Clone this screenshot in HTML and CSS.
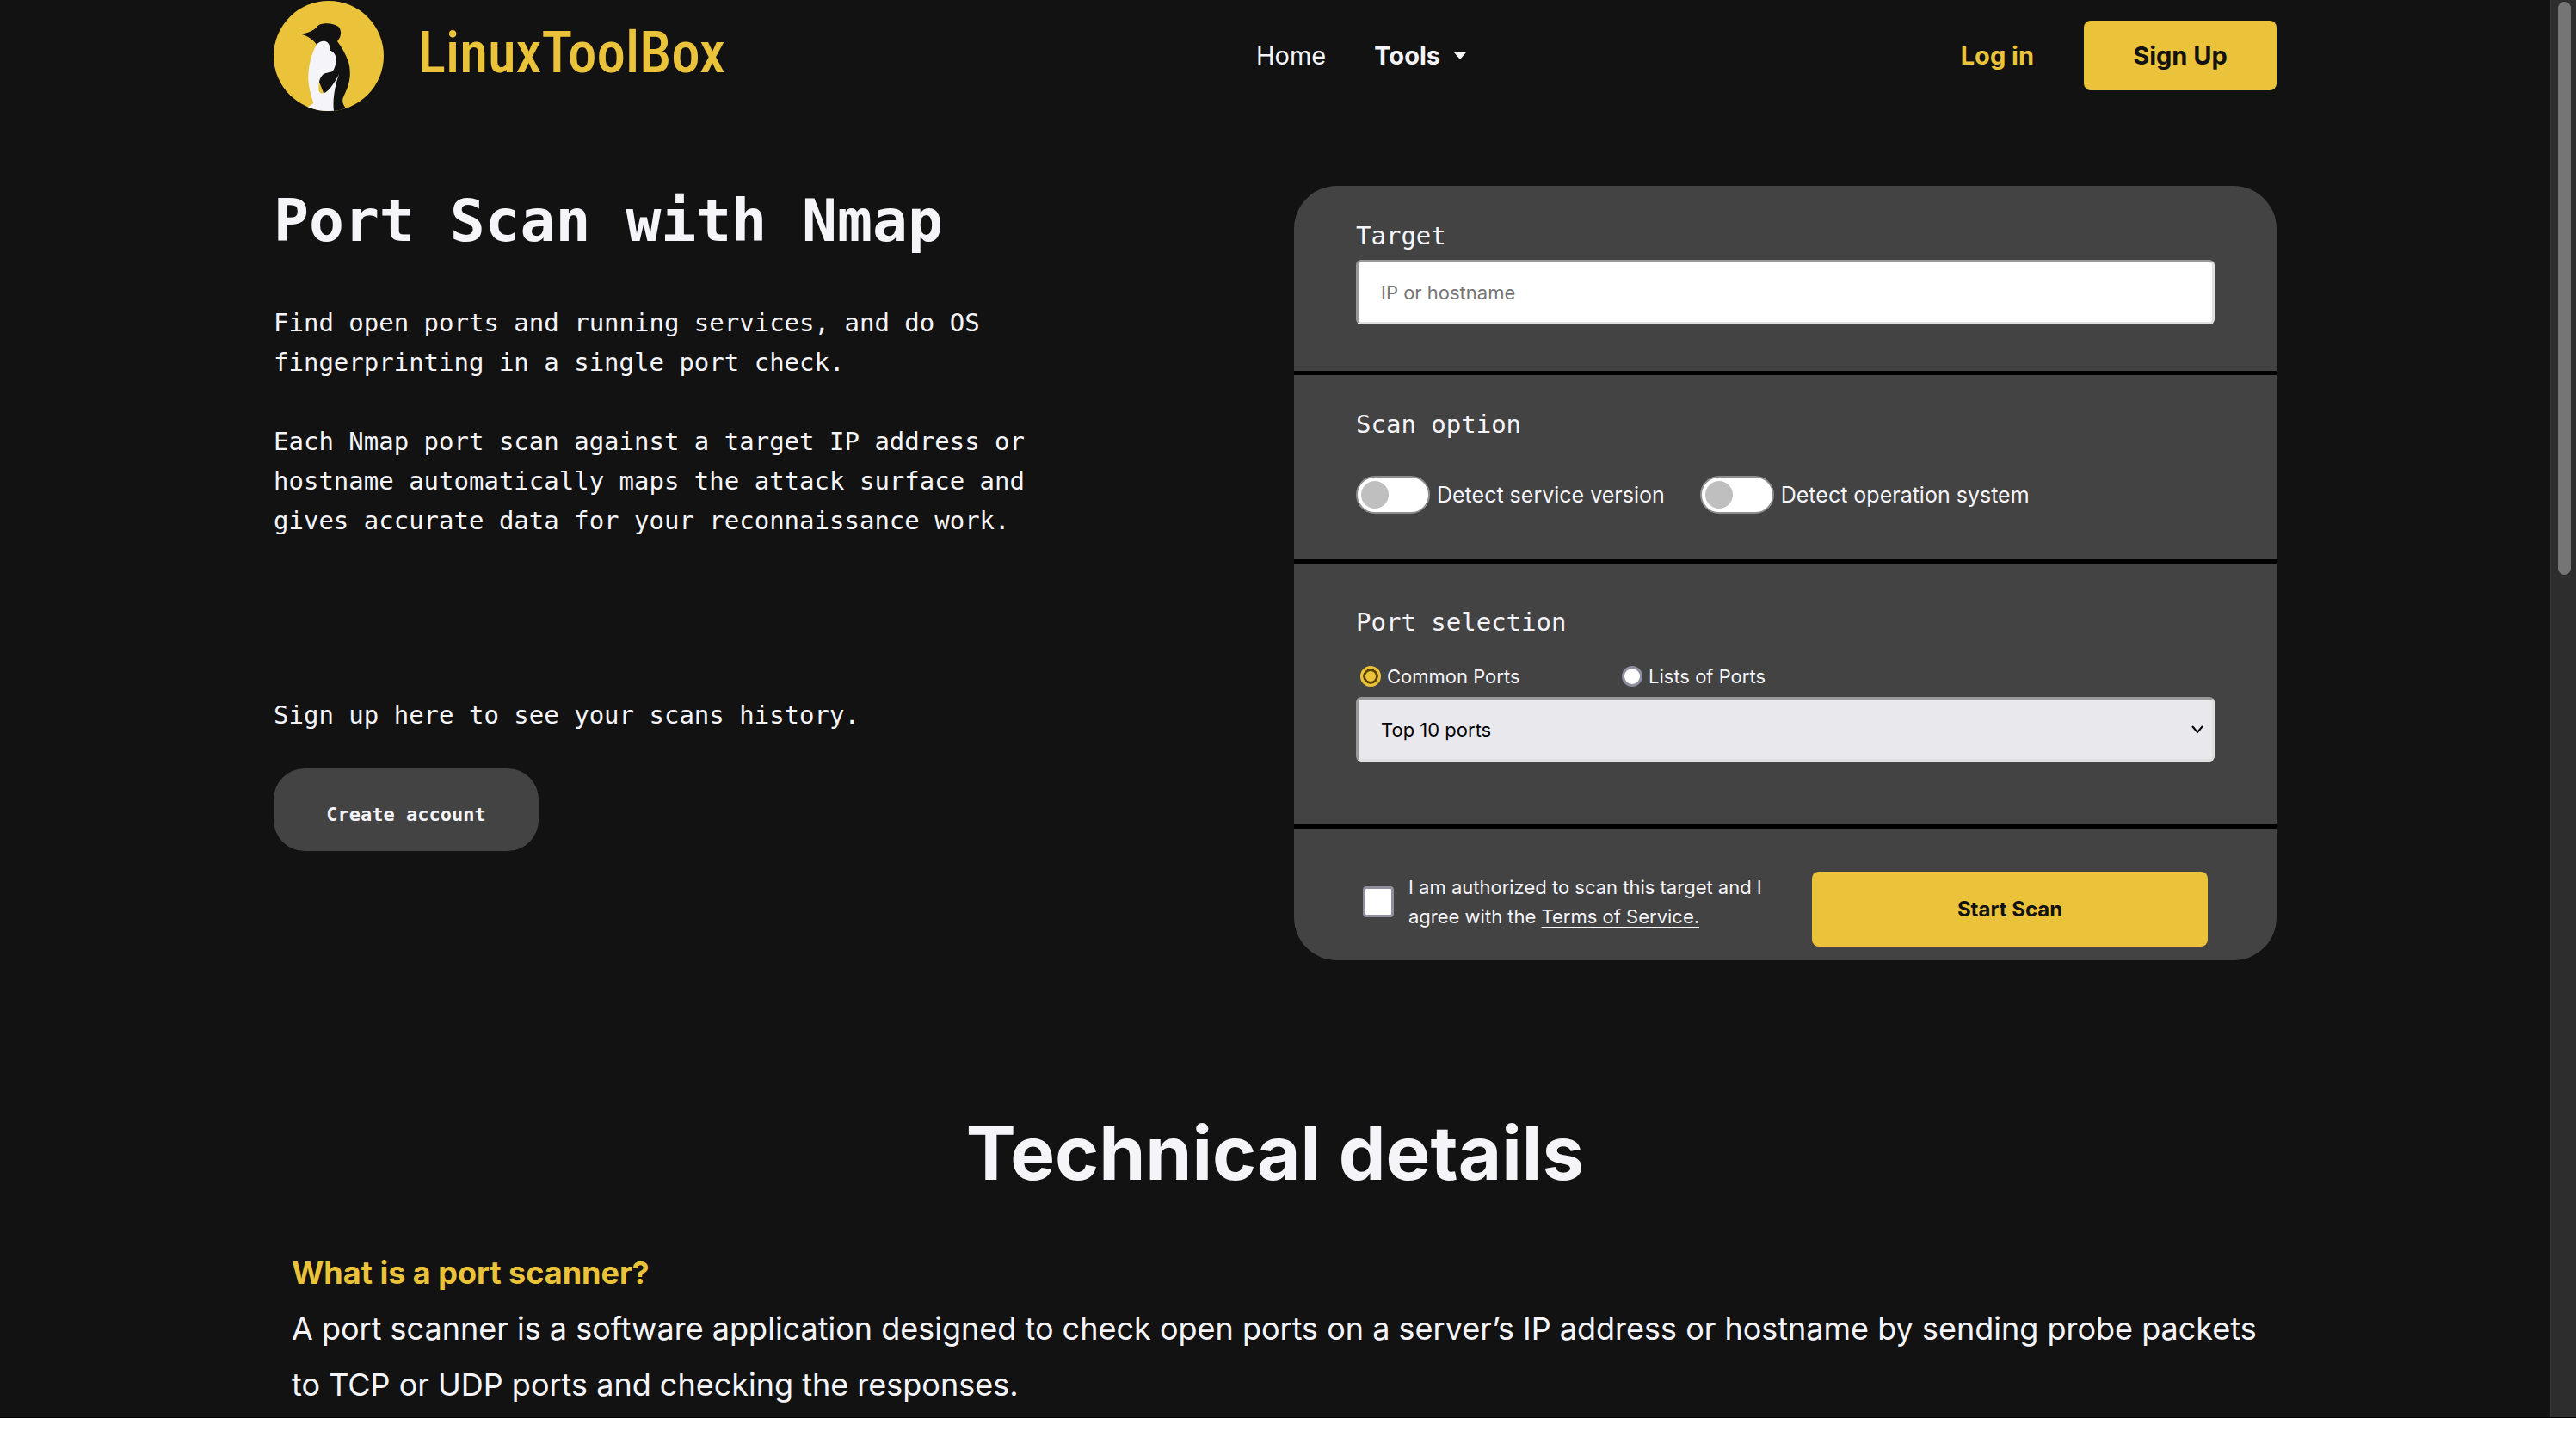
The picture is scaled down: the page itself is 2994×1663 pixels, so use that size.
FILE: index.html
```html
<!DOCTYPE html>
<html lang="en">
<head>
<meta charset="utf-8">
<meta name="viewport" content="width=device-width, initial-scale=1">
<title>Port Scan with Nmap - LinuxToolBox</title>
<link rel="stylesheet" href="styles.css">
</head>
<body>
<div class="viewport">
  <div class="page">
    <header class="header container">
      <a class="brand" href="#">
        <svg class="brand-mark" viewBox="24 5 384 384" aria-hidden="true">
          <defs><clipPath id="disc"><circle cx="216" cy="197" r="192"/></clipPath></defs>
          <circle cx="216" cy="197" r="192" fill="#ebc33a"/>
          <g clip-path="url(#disc)">
            <path fill="#121212" d="M119 121C150 116 163 107 174 97C183 86 195 84 209 84C225 84 238 88 249 94C257 101 259 111 258 122C256 134 250 140 246 146C262 168 275 190 283 213C290 233 291 250 290 270C288 295 278 318 268 339C261 353 265 366 275 378L280 395L226 395L160 230L174 157C160 138 143 127 119 121Z"/>
            <path fill="#f4f4f9" d="M172 160C181 148 190 145 201 145C214 147 222 158 221 178C233 182 242 193 242 209C241 227 237 242 230 250C218 256 202 254 193 265C182 278 181 296 181 314C183 325 189 328 197 327C208 324 215 316 223 307C235 292 244 276 252 261C245 280 240 300 236 324C233 345 231 366 234 390L140 390L146 373L163 362C155 336 147 310 145 280C144 235 154 195 172 160Z"/>
          </g>
        </svg>
        <span class="brand-name">LinuxToolBox</span>
      </a>
      <nav class="nav" aria-label="Main">
        <a href="#">Home</a>
        <button class="nav-menu" type="button">Tools
          <svg class="caret" viewBox="0 0 14 8" aria-hidden="true"><path d="M0 0H14L7 8Z" fill="currentColor"/></svg>
        </button>
      </nav>
      <div class="account">
        <a class="login" href="#">Log in</a>
        <a class="button signup" href="#">Sign Up</a>
      </div>
    </header>

    <main class="container">
      <section class="hero">
        <div class="intro">
          <h1>Port Scan with Nmap</h1>
          <p>Find open ports and running services, and do OS fingerprinting in a single port check.</p>
          <p>Each Nmap port scan against a target IP address or hostname automatically maps the attack surface and gives accurate data for your reconnaissance work.</p>
          <p class="history">Sign up here to see your scans history.</p>
          <button class="create" type="button">Create account</button>
        </div>

        <form class="card">
          <div class="panel target">
            <label class="title" for="target">Target</label>
            <input class="field" id="target" type="text" placeholder="IP or hostname">
          </div>
          <div class="panel options">
            <h2 class="title">Scan option</h2>
            <div class="toggles">
              <label class="toggle"><input type="checkbox">Detect service version</label>
              <label class="toggle"><input type="checkbox">Detect operation system</label>
            </div>
          </div>
          <div class="panel ports">
            <h2 class="title">Port selection</h2>
            <div class="radios">
              <label class="radio"><input type="radio" name="ports" checked>Common Ports</label>
              <label class="radio"><input type="radio" name="ports">Lists of Ports</label>
            </div>
            <div class="select">
              <select class="field" aria-label="Ports to scan"><option>Top 10 ports</option></select>
              <svg class="chevron" viewBox="0 0 14 10" aria-hidden="true"><path d="M1 1L7 8L13 1" fill="none" stroke="#000" stroke-width="2"/></svg>
            </div>
          </div>
          <div class="panel submit">
            <div class="terms">
              <input id="agree" type="checkbox">
              <label for="agree">I am authorized to scan this target and I agree with the <a href="#">Terms of Service.</a></label>
            </div>
            <button class="button start" type="button">Start Scan</button>
          </div>
        </form>
      </section>

      <section class="details">
        <h2>Technical details</h2>
        <h3>What is a port scanner?</h3>
        <p>A port scanner is a software application designed to check open ports on a server’s IP address or hostname by sending probe packets to TCP or UDP ports and checking the responses.</p>
      </section>
    </main>
  </div>
  <div class="scrollbar"><div class="thumb"></div></div>
</div>
</body>
</html>
```
FILE: styles.css
```css
:root {
  --bg: #121212;
  --card: #434343;
  --text: #f4f4f9;
  --yellow: #ebc33a;
  --mono: "DejaVu Sans Mono", monospace;
}

* { box-sizing: border-box; }

body {
  margin: 0;
  height: 100vh;
  padding-bottom: 15px;
  background: #fff;
  color: var(--text);
  font-family: Inter, sans-serif;
  font-size: 29px;
}

h1, h2, h3, p { margin: 0; }
a { color: inherit; text-decoration: none; }
button, input, select { font-family: inherit; }

.viewport {
  display: grid;
  grid-template-columns: 1fr 30px;
  height: 100%;
  background: var(--bg);
  border-bottom: 1px solid #000;
}

.page { overflow: hidden; }

.container {
  width: 80%;
  min-width: min(100%, 2328px);
  max-width: 2328px;
  margin: 0 auto;
}

/* Header */
.header {
  display: grid;
  grid-template-columns: 1142px 1fr auto;
  align-items: center;
  height: 129px;
}

.brand { display: flex; align-items: center; gap: 40px; color: var(--yellow); }
.brand-mark { width: 128px; height: 128px; }
.brand-name {
  padding-bottom: 8px;
  font-family: "Roboto Condensed", "DejaVu Sans Condensed", sans-serif;
  font-size: 67px;
  font-weight: 500;
  line-height: 120px;
}

.nav { display: flex; align-items: center; gap: 56px; }
.nav-menu {
  display: flex;
  align-items: center;
  gap: 16px;
  padding: 0;
  border: 0;
  background: none;
  color: inherit;
  font-size: 29px;
  font-weight: 700;
}
.caret { width: 14px; height: 8px; }

.account { display: flex; align-items: center; gap: 58px; font-weight: 700; }
.login { color: var(--yellow); }

.button {
  display: flex;
  align-items: center;
  justify-content: center;
  border: 0;
  border-radius: 8px;
  background: var(--yellow);
  color: var(--bg);
  font-weight: 700;
}
.signup { width: 224px; height: 81px; }

/* Hero */
.hero {
  display: grid;
  grid-template-columns: 900px 1142px;
  justify-content: space-between;
  padding-top: 87px;
}

.intro { font-family: var(--mono); line-height: 46px; }
.intro h1 { margin-bottom: 54px; font-size: 68px; line-height: 82px; }
.intro p { margin-bottom: 46px; }
.intro .history { margin: 180px 0 39px; }
.create {
  width: 308px;
  height: 96px;
  padding: 10px 0 0;
  border: 0;
  border-radius: 36px;
  background: var(--card);
  color: var(--text);
  font-family: var(--mono);
  font-size: 22px;
  font-weight: 700;
}

/* Scan form */
.card {
  overflow: hidden;
  border-radius: 50px;
  background: var(--card);
  font-size: 22px;
}
.panel { padding: 0 72px; }
.panel + .panel { border-top: 5px solid #000; }

.title {
  display: block;
  font-family: var(--mono);
  font-size: 29px;
  font-weight: 400;
  line-height: 46px;
}

.field {
  display: block;
  width: 100%;
  height: 75px;
  padding: 0 26px;
  border: 3px solid;
  border-color: #999 #e0e0e0 #e0e0e0 #999;
  border-radius: 6px;
  background: #fff;
  color: #000;
  font-size: 22px;
}
.field::placeholder { color: #757575; opacity: 1; }

.target { padding-top: 35px; padding-bottom: 54px; }
.target .title { margin-bottom: 5px; }

.options { padding-top: 34px; padding-bottom: 53px; }
.toggles { display: flex; gap: 41px; margin-top: 37px; font-size: 25px; }
.toggle { display: flex; align-items: center; gap: 8px; }
.toggle input {
  appearance: none;
  width: 86px;
  height: 44px;
  margin: 0;
  padding: 4px;
  border: 2px solid #8f8f8f;
  border-radius: 22px;
  background: #fff;
}
.toggle input::before {
  content: "";
  display: block;
  width: 32px;
  height: 32px;
  border-radius: 50%;
  background: #bfbfbf;
}

.ports { padding-top: 45px; padding-bottom: 73px; }
.radios { display: grid; grid-template-columns: 304px 1fr; margin: 28px 0 12px; padding-left: 5px; }
.radio { display: flex; align-items: center; gap: 7px; line-height: 24px; }
.radio input {
  appearance: none;
  width: 24px;
  height: 24px;
  margin: 0;
  border: 3px solid #8f8f9d;
  border-radius: 50%;
  background: #fff;
}
.radio input:checked {
  border-color: var(--yellow);
  background: var(--yellow);
  box-shadow: inset 0 0 0 3px #5c4300;
}

.select { position: relative; }
.select .field {
  appearance: none;
  border-color: #999 #e0e0e0 #e0e0e0 #999;
  background: #e9e8ed;
}
.chevron { position: absolute; top: 33px; right: 13px; width: 14px; height: 10px; }

.submit {
  display: flex;
  justify-content: space-between;
  gap: 32px;
  padding: 50px 80px 16px;
}
.terms { display: flex; align-items: center; gap: 17px; height: 70px; line-height: 34px; }
.terms input {
  appearance: none;
  flex: none;
  width: 36px;
  height: 36px;
  margin: 0;
  border: 3px solid #8f8f9d;
  border-radius: 4px;
  background: #fff;
}
.terms a {
  display: inline-block;
  text-decoration: underline;
  text-decoration-thickness: 1px;
  text-underline-offset: 4px;
}
.start { flex: none; width: 460px; height: 87px; font-size: 24px; }

/* Technical details */
.details { padding: 171px 21px 0; font-size: 36px; line-height: 65px; }
.details h2 { margin-bottom: 54px; font-size: 87px; line-height: 106px; text-align: center; }
.details h3 { color: var(--yellow); font-size: 36px; }

.scrollbar { padding: 2px 6px 0 8px; background: #2d2d2d; border-left: 1px solid #383838; }
.thumb { height: 666px; border-radius: 8px; background: #757575; }
```
